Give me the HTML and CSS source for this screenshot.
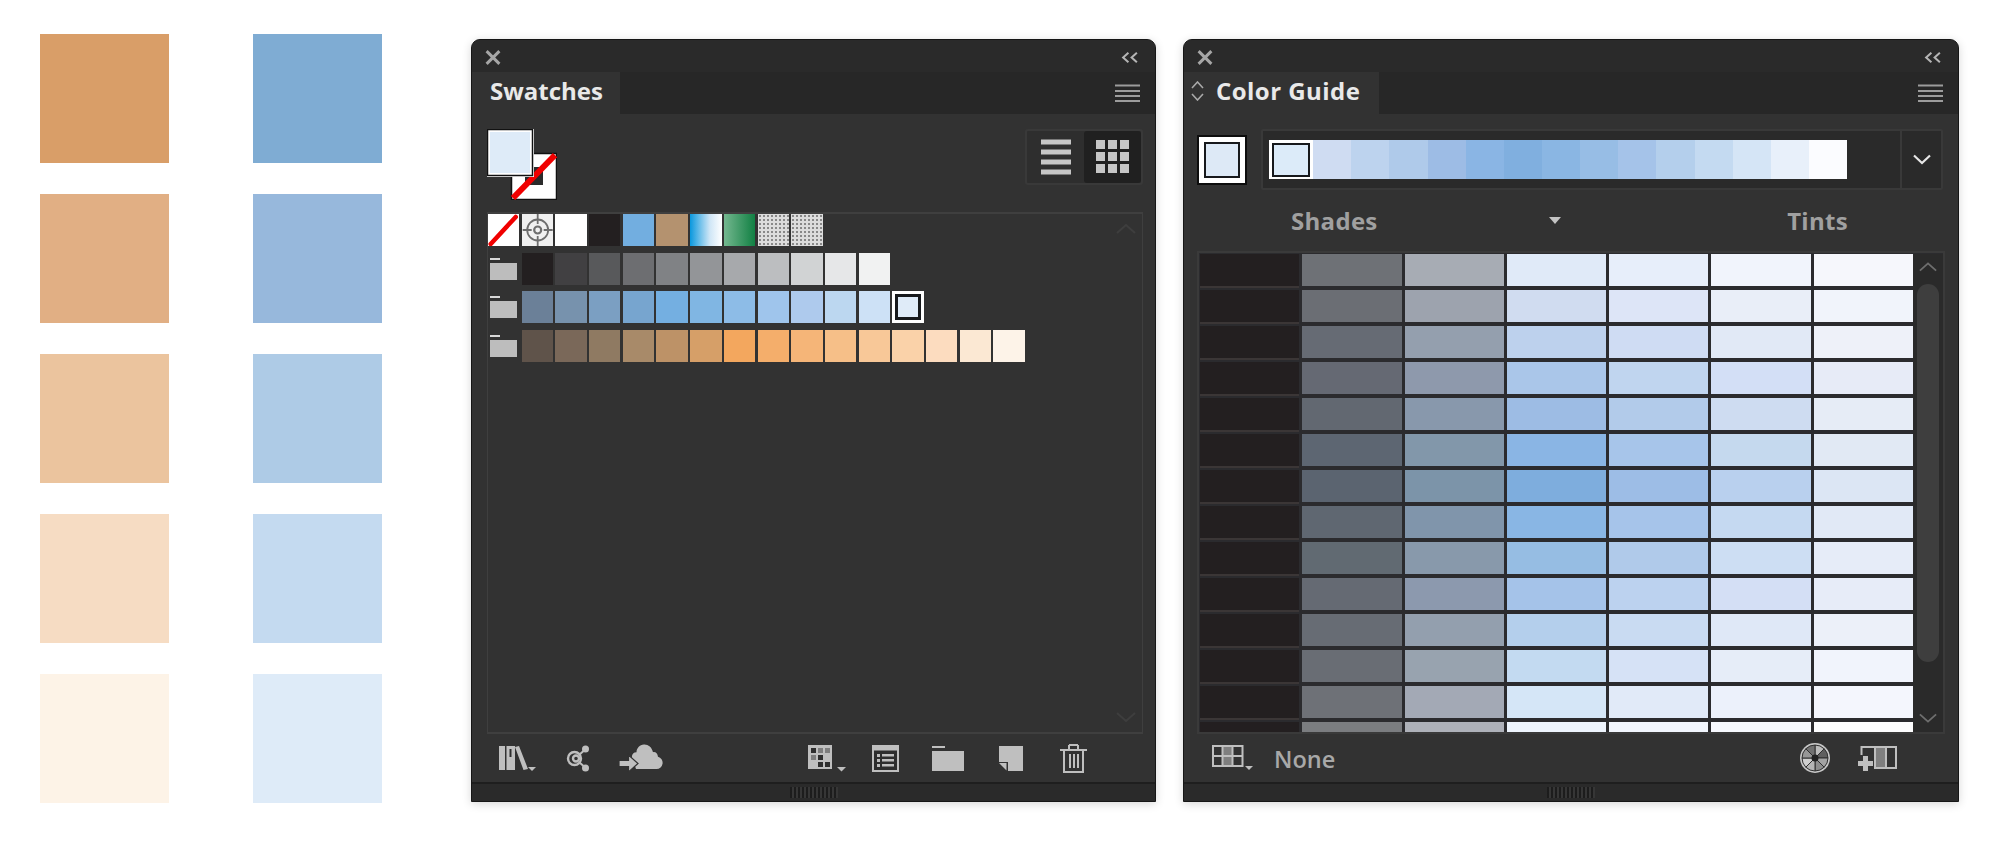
FILE: index.html
```html
<!DOCTYPE html>
<html lang="en">
<head>
<meta charset="utf-8">
<title>Swatches and Color Guide</title>
<link rel="stylesheet" href="styles.css">
</head>
<body>
<main class="page">
  <section class="palette">
    <div class="chip" style="background:#d99e68"></div><div class="chip" style="background:#7facd3"></div>
    <div class="chip" style="background:#e1af84"></div><div class="chip" style="background:#97b8dc"></div>
    <div class="chip" style="background:#ebc49e"></div><div class="chip" style="background:#aecbe6"></div>
    <div class="chip" style="background:#f6dcc3"></div><div class="chip" style="background:#c4daf0"></div>
    <div class="chip" style="background:#fdf3e7"></div><div class="chip" style="background:#deebf8"></div>
  </section>

  <section class="panel panel-swatches">
    <div class="titlebar">
      <svg class="close" viewBox="0 0 15 14"><path d="M1.500 1l12 12M13.500 1l-12 12"/></svg>
      <svg class="collapse" viewBox="0 0 17 12"><path d="M7 1.500L2 6l5 4.500M15 1.500L10 6l5 4.500"/></svg>
    </div>
    <div class="tabs">
      <div class="tab tab-swatches">Swatches</div>
      <svg class="menu" viewBox="0 0 25 18"><path d="M0 1.500h25M0 7h25M0 12h25M0 17h25"/></svg>
    </div>
    <div class="body body-swatches">
      <div class="sw-head">
        <svg class="fillstroke" viewBox="0 0 70 71">
          <rect x="24.500" y="24.500" width="45" height="46" fill="#fff" stroke="#111" stroke-width="1.500"/>
          <rect x="38" y="38" width="18" height="18" fill="#2b2b2b"/>
          <path d="M26 69L68 26" stroke="#f00000" stroke-width="6"/>
          <rect x="1" y="1" width="44" height="45" fill="#deebf8" stroke="#fff" stroke-width="4"/>
          <rect x="0.500" y="0.500" width="45" height="46" fill="none" stroke="#111" stroke-width="1.500"/>
        </svg>
        <div class="viewbox">
          <div class="viewbtn">
            <svg width="30" height="36" viewBox="0 0 30 36"><path class="bars" d="M0 3h30M0 13h30M0 23h30M0 33h30"/></svg>
          </div>
          <div class="viewbtn viewbtn-on">
            <svg width="34" height="34" viewBox="0 0 34 34"><path class="dots" d="M0 0h9v9H0zM12 0h9v9h-9zM24 0h9v9h-9zM0 12h9v9H0zM12 12h9v9h-9zM24 12h9v9h-9zM0 24h9v9H0zM12 24h9v9h-9zM24 24h9v9h-9z"/></svg>
          </div>
        </div>
      </div>
      <div class="sw-box">
        <div class="sw-list">
          <div class="sw-row">
            <div class="sw sw-white">
              <svg viewBox="0 0 30 32"><path d="M2 30L27 3" stroke="#f00000" stroke-width="4.500" stroke-linecap="round"/></svg>
            </div>
            <div class="sw sw-reg">
              <svg viewBox="0 0 30 32" fill="none" stroke="#6e6e6e"><circle cx="15" cy="16" r="10.500" stroke-width="1.800"/><circle cx="15" cy="16" r="3.500" stroke-width="2.200"/><path d="M15 0v10M15 22v10M0 16h9M21 16h9" stroke-width="1.800"/></svg>
            </div>
            <div class="sw sw-white"></div>
            <div class="sw" style="background:#231f20"></div>
            <div class="sw" style="background:#72aee0"></div>
            <div class="sw" style="background:#b4926f"></div>
            <div class="sw sw-grad-blue"></div>
            <div class="sw sw-grad-green"></div>
            <div class="sw sw-dots"></div>
            <div class="sw sw-dots"></div>
          </div>
          <div class="sw-row">
            <div class="sw-folder"><span class="f-tab"></span><span class="f-body"></span></div>
            <div class="sw" style="background:#231f20"></div>
            <div class="sw" style="background:#414042"></div>
            <div class="sw" style="background:#58595b"></div>
            <div class="sw" style="background:#6d6e71"></div>
            <div class="sw" style="background:#808285"></div>
            <div class="sw" style="background:#939598"></div>
            <div class="sw" style="background:#a7a9ac"></div>
            <div class="sw" style="background:#bcbec0"></div>
            <div class="sw" style="background:#d1d3d4"></div>
            <div class="sw" style="background:#e6e7e8"></div>
            <div class="sw" style="background:#f1f2f2"></div>
          </div>
          <div class="sw-row">
            <div class="sw-folder"><span class="f-tab"></span><span class="f-body"></span></div>
            <div class="sw" style="background:#6b8098"></div>
            <div class="sw" style="background:#7792ad"></div>
            <div class="sw" style="background:#7b9fc2"></div>
            <div class="sw" style="background:#77a5cf"></div>
            <div class="sw" style="background:#74afe1"></div>
            <div class="sw" style="background:#80b6e3"></div>
            <div class="sw" style="background:#8dbce7"></div>
            <div class="sw" style="background:#9fc5ec"></div>
            <div class="sw" style="background:#aecaed"></div>
            <div class="sw" style="background:#bcd7f0"></div>
            <div class="sw" style="background:#cde1f6"></div>
            <div class="sw sw-selected"><span class="sw-selected-in"></span></div>
          </div>
          <div class="sw-row">
            <div class="sw-folder"><span class="f-tab"></span><span class="f-body"></span></div>
            <div class="sw" style="background:#5f534a"></div>
            <div class="sw" style="background:#7a6859"></div>
            <div class="sw" style="background:#8f7a62"></div>
            <div class="sw" style="background:#a88a69"></div>
            <div class="sw" style="background:#bd9267"></div>
            <div class="sw" style="background:#d69f68"></div>
            <div class="sw" style="background:#f3a75e"></div>
            <div class="sw" style="background:#f4ae6b"></div>
            <div class="sw" style="background:#f5b578"></div>
            <div class="sw" style="background:#f6bf88"></div>
            <div class="sw" style="background:#f8c898"></div>
            <div class="sw" style="background:#fad2a9"></div>
            <div class="sw" style="background:#fcdcbf"></div>
            <div class="sw" style="background:#fbe8d3"></div>
            <div class="sw" style="background:#fdf3e8"></div>
          </div>
        </div>
        <div class="sw-scroll">
          <svg class="faint" viewBox="0 0 20 10"><path d="M1 9l9-8 9 8"/></svg>
          <svg class="faint" viewBox="0 0 20 10"><path d="M1 1l9 8 9-8"/></svg>
        </div>
      </div>
    </div>
    <div class="footer footer-swatches">
      <svg class="ic ic-lib" width="37" height="27" viewBox="0 0 37 27">
        <path d="M0 1h6v24H0zM7.500 1h8.500v24H7.500zM16 2l4-1 9 23-4.500 1z"/>
        <path class="cut" d="M10.500 4h2v8h-2z"/>
        <path d="M29 22h8l-4 4z"/>
      </svg>
      <svg class="ic ic-link" width="24" height="27" viewBox="0 0 24 27">
        <circle cx="19.500" cy="4" r="3.500"/><circle cx="19.500" cy="23" r="3.500"/>
        <path class="line" d="M17.500 6L13 10M13 17l4.500 4"/>
        <circle class="ring" cx="8.500" cy="13.500" r="6.500"/><circle class="ring" cx="10" cy="13.500" r="3"/>
      </svg>
      <svg class="ic ic-cloud" width="44" height="28" viewBox="0 0 44 28">
        <path d="M17 25h20.500a6.200 6.200 0 0 0 1.500-12.200C38.600 9.500 36.500 7.600 34 8.200 32.800 3 29 .2 25 .5c-4.500.4-7.500 3.800-7.500 7.700-3.200 0-5 2.500-4.500 5.300z"/>
        <path class="edge" d="M0 16.500h9.500v-5.500l9.500 8.500-9.500 8.500v-5.500H0z"/>
      </svg>
      <svg class="ic ic-grid" width="38" height="27" viewBox="0 0 38 27">
        <path d="M0 0h24v24H0z"/>
        <path fill="#2e2e2e" d="M3 3h5v5H3zM10 10h5v5h-5zM17 17h5v5h-5zM10 17h5v5h-5z"/>
        <path fill="#7e7e7e" d="M10 3h5v5h-5zM17 3h5v5h-5zM3 10h5v5H3z"/>
        <path d="M29 22h9l-4.500 4.500z"/>
      </svg>
      <svg class="ic ic-list" width="27" height="27" viewBox="0 0 27 27">
        <path d="M0 0h27v27H0z"/>
        <path class="cut" d="M2 5.500h23V25H2z"/>
        <path d="M5 9h3v3H5zM10 9h12v2.500H10zM5 14h3v3H5zM10 14h12v2.500H10zM5 19h3v3H5zM10 19h12v2.500H10z"/>
      </svg>
      <svg class="ic ic-folder" width="32" height="25" viewBox="0 0 32 25">
        <path d="M0 5h32v20H0zM0 0h13v2H0z"/>
      </svg>
      <svg class="ic ic-new" width="24" height="25" viewBox="0 0 24 25">
        <path d="M0 0h24v25H9v-9H0z"/><path d="M0 17h7.500v7.500z"/>
      </svg>
      <svg class="ic ic-trash" width="27" height="29" viewBox="0 0 27 29">
        <path d="M0 5h27v2H0zM9 0h9v2H9zM8 1h2v5H8zM17 1h2v5h-2z"/>
        <path d="M3 7h2v20h17V7h2v22H3zM9 10h2v14H9zM13 10h2v14h-2zM17 10h2v14h-2z"/>
      </svg>
    </div>
    <div class="strip"><span class="grip"></span></div>
  </section>

  <section class="panel panel-guide">
    <div class="titlebar">
      <svg class="close" viewBox="0 0 15 14"><path d="M1.500 1l12 12M13.500 1l-12 12"/></svg>
      <svg class="collapse" viewBox="0 0 17 12"><path d="M7 1.500L2 6l5 4.500M15 1.500L10 6l5 4.500"/></svg>
    </div>
    <div class="tabs">
      <div class="tab tab-guide">
        <svg class="updown" viewBox="0 0 13 20"><path d="M1 7l5.500-6L12 7M1 13l5.500 6L12 13"/></svg>
        <span>Color Guide</span>
      </div>
      <svg class="menu" viewBox="0 0 25 18"><path d="M0 1.500h25M0 7h25M0 12h25M0 17h25"/></svg>
    </div>
    <div class="body body-guide">
      <div class="cg-top">
        <div class="cg-active"><span class="cg-active-in"></span></div>
        <div class="cg-strip">
          <div class="cg-bar-wrap">
            <div class="cg-bar">
              <div class="seg seg-chip"><span class="seg-chip-in"></span></div>
              <div class="seg" style="background:#cfdcf2"></div>
              <div class="seg" style="background:#bdd3ee"></div>
              <div class="seg" style="background:#afcaea"></div>
              <div class="seg" style="background:#9dbce5"></div>
              <div class="seg" style="background:#8ab5e4"></div>
              <div class="seg" style="background:#80afdf"></div>
              <div class="seg" style="background:#8ab6e3"></div>
              <div class="seg" style="background:#97bde5"></div>
              <div class="seg" style="background:#a5c3e9"></div>
              <div class="seg" style="background:#b4cfec"></div>
              <div class="seg" style="background:#c4daf1"></div>
              <div class="seg" style="background:#d5e5f6"></div>
              <div class="seg" style="background:#e8f0fa"></div>
              <div class="seg" style="background:#fbfcff"></div>
            </div>
          </div>
          <div class="cg-drop">
            <svg width="18" height="11" viewBox="0 0 18 11"><path d="M1 1.500l8 7.500 8-7.500"/></svg>
          </div>
        </div>
      </div>
      <div class="cg-labels">
        <span class="lbl">Shades</span>
        <span class="lbl-caret"></span>
        <span class="lbl lbl-tints">Tints</span>
      </div>
      <div class="cg-box">
        <div class="cg-grid">
          <div class="k"></div><div style="background:#6e7176"></div><div style="background:#a7acb4"></div><div style="background:#e0eaf8"></div><div style="background:#e7eefa"></div><div style="background:#f1f4fc"></div><div style="background:#f6f7fc"></div>
          <div class="k"></div><div style="background:#6b6e74"></div><div style="background:#9da3ae"></div><div style="background:#d0dcf0"></div><div style="background:#dde5f7"></div><div style="background:#e9eef8"></div><div style="background:#f1f4fb"></div>
          <div class="k"></div><div style="background:#666b74"></div><div style="background:#949fae"></div><div style="background:#bdd1ed"></div><div style="background:#cfdcf3"></div><div style="background:#e1e9f6"></div><div style="background:#eef1f9"></div>
          <div class="k"></div><div style="background:#656973"></div><div style="background:#8e99ac"></div><div style="background:#aac6e9"></div><div style="background:#c0d5ef"></div><div style="background:#d3dff6"></div><div style="background:#e7ebf7"></div>
          <div class="k"></div><div style="background:#626871"></div><div style="background:#8898ac"></div><div style="background:#9dbce4"></div><div style="background:#b2cbea"></div><div style="background:#cedcf1"></div><div style="background:#e6ecf6"></div>
          <div class="k"></div><div style="background:#5d6672"></div><div style="background:#8297aa"></div><div style="background:#8ab5e4"></div><div style="background:#a7c5ea"></div><div style="background:#c5d9ee"></div><div style="background:#e1e9f4"></div>
          <div class="k"></div><div style="background:#5b6470"></div><div style="background:#7c94a9"></div><div style="background:#7eaddd"></div><div style="background:#9dbde6"></div><div style="background:#b9d0ee"></div><div style="background:#dce6f4"></div>
          <div class="k"></div><div style="background:#5f6771"></div><div style="background:#8095ab"></div><div style="background:#89b6e4"></div><div style="background:#a6c4ea"></div><div style="background:#c5d9f1"></div><div style="background:#e1e9f6"></div>
          <div class="k"></div><div style="background:#616a72"></div><div style="background:#8899ab"></div><div style="background:#96bde3"></div><div style="background:#b0caea"></div><div style="background:#cddef3"></div><div style="background:#e6ecf8"></div>
          <div class="k"></div><div style="background:#656a73"></div><div style="background:#8c99ae"></div><div style="background:#a5c3e9"></div><div style="background:#bcd2ef"></div><div style="background:#d4dff5"></div><div style="background:#e7ecf8"></div>
          <div class="k"></div><div style="background:#676c74"></div><div style="background:#939fae"></div><div style="background:#b4cfec"></div><div style="background:#c9dbf2"></div><div style="background:#dfe8f7"></div><div style="background:#ecf0f9"></div>
          <div class="k"></div><div style="background:#696d74"></div><div style="background:#98a3af"></div><div style="background:#c3daf1"></div><div style="background:#d6e2f6"></div><div style="background:#e6edf8"></div><div style="background:#f1f4fc"></div>
          <div class="k"></div><div style="background:#6e7177"></div><div style="background:#a3a9b5"></div><div style="background:#d5e6f7"></div><div style="background:#e1eaf8"></div><div style="background:#ecf1fb"></div><div style="background:#f4f6fd"></div>
          <div class="k"></div><div style="background:#7b7d80"></div><div style="background:#aeb1b9"></div><div style="background:#eef4fd"></div><div style="background:#f2f6fd"></div><div style="background:#f7f9fe"></div><div style="background:#fdfdfe"></div>
        </div>
        <div class="cg-scroll">
          <svg class="arrow" viewBox="0 0 20 10"><path d="M1 9l9-8 9 8"/></svg>
          <div class="thumb"></div>
          <svg class="arrow" viewBox="0 0 20 10"><path d="M1 1l9 8 9-8"/></svg>
        </div>
      </div>
    </div>
    <div class="footer footer-guide">
      <svg class="ic ic-harm" width="41" height="26" viewBox="0 0 41 26">
        <path fill="#7f7f7f" d="M10 1h11v20H10z"/>
        <path class="gridline" d="M1 1h29.500v20H1zM1 11h29.500M10.500 1v20M20.500 1v20"/>
        <path d="M33 21h8l-4 4z"/>
      </svg>
      <span class="none">None</span>
      <svg class="ic ic-wheel" width="30" height="30" viewBox="0 0 30 30">
        <circle cx="15" cy="15" r="15" fill="#c8c8c8"/>
        <g stroke="#2f2f2f" stroke-width="1">
          <path fill="#bdbdbd" d="M15 15V2A13 13 0 0 1 24.200 5.800Z"/>
          <path fill="#5f5f5f" d="M15 15L24.200 5.800A13 13 0 0 1 28 15Z"/>
          <path fill="#a2a2a2" d="M15 15H28A13 13 0 0 1 24.200 24.200Z"/>
          <path fill="#8d8d8d" d="M15 15L24.200 24.200A13 13 0 0 1 15 28Z"/>
          <path fill="#b5b5b5" d="M15 15V28A13 13 0 0 1 5.800 24.200Z"/>
          <path fill="#d0d0d0" d="M15 15L5.800 24.200A13 13 0 0 1 2 15Z"/>
          <path fill="#979797" d="M15 15H2A13 13 0 0 1 5.800 5.800Z"/>
          <path fill="#727272" d="M15 15L5.800 5.800A13 13 0 0 1 15 2Z"/>
        </g>
        <circle cx="15" cy="15" r="3.500" fill="#222"/>
      </svg>
      <svg class="ic ic-add" width="39" height="25" viewBox="0 0 39 25">
        <path class="gridline" d="M3.500 9V1H38v21H17V1M28 1v21"/>
        <path fill="#7f7f7f" d="M18 2h9v19h-9z"/>
        <path fill="#323232" d="M0 9h15v16H0z"/>
        <path d="M5 10h5v5h5v5h-5v5H5v-5H0v-5h5z"/>
      </svg>
    </div>
    <div class="strip"><span class="grip"></span></div>
  </section>
</main>
</body>
</html>
```
FILE: styles.css
```css
* { box-sizing: border-box; }
html, body { margin: 0; padding: 0; background: #fff; }
body { font-family: "Open Sans", "Noto Sans", sans-serif; }

.page {
  width: 2000px;
  height: 846px;
  padding: 34px 0 0 40px;
  display: flex;
  align-items: flex-start;
  overflow: hidden;
}

.palette {
  display: grid;
  grid-template-columns: 129px 129px;
  grid-auto-rows: 129px;
  column-gap: 84px;
  row-gap: 31px;
}

.panel {
  margin-top: 5px;
  height: 763px;
  display: flex;
  flex-direction: column;
  background: #323232;
  border: 1px solid #161616;
  border-radius: 9px 9px 0 0;
  box-shadow: 0 2px 10px rgba(0, 0, 0, .16);
  overflow: hidden;
}
.panel-swatches { width: 685px; margin-left: 89px; }
.panel-guide { width: 776px; margin-left: 27px; }

.titlebar {
  height: 32px;
  flex: none;
  background: #2a2a2a;
  display: flex;
  align-items: center;
  justify-content: space-between;
  padding: 2px 16px 0 13px;
}
.close { width: 16px; height: 15px; fill: none; stroke: #a6a6a6; stroke-width: 2.8; }
.collapse { width: 18px; height: 13px; fill: none; stroke: #b4b4b4; stroke-width: 1.9; }

.tabs {
  height: 42px;
  flex: none;
  background: #272727;
  display: flex;
  align-items: stretch;
  justify-content: space-between;
  padding-right: 15px;
}
.tab {
  background: #323232;
  color: #e9e9e9;
  font-size: 24px;
  font-weight: 700;
  line-height: 38px;
  padding-bottom: 4px;
  display: flex;
  align-items: center;
}
.tab-swatches { width: 148px; padding-left: 18px; }
.tab-guide { width: 195px; padding-left: 7px; gap: 12px; letter-spacing: .45px; }
.updown { width: 13px; height: 20px; fill: none; stroke: #a9a9a9; stroke-width: 1.6; }
.menu { width: 25px; height: 18px; align-self: center; fill: none; stroke: #9c9c9c; stroke-width: 2; }

.body { flex: 1; min-height: 0; display: flex; flex-direction: column; }
.body-swatches { padding: 15px 12px 0 15px; }
.body-guide { padding: 15px 13px 0 13px; }

.sw-head {
  height: 56px;
  flex: none;
  margin-bottom: 27px;
  display: flex;
  justify-content: space-between;
}
.fillstroke { width: 70px; height: 71px; flex: none; }
.viewbox {
  width: 118px;
  height: 56px;
  border: 2px solid #393939;
  border-radius: 3px;
  background: #2e2e2e;
  display: flex;
}
.viewbtn { flex: 1; display: flex; align-items: center; justify-content: center; }
.viewbtn-on { background: #202020; border-radius: 3px; }
.bars { fill: none; stroke: #c6c6c6; stroke-width: 5; }
.dots { fill: #c6c6c6; }

.sw-box {
  flex: 1;
  min-height: 0;
  display: flex;
  border: 1px solid #3f3f3f;
  border-bottom-width: 2px;
  border-top-width: 2px;
}
.sw-list { flex: 1; }
.sw-row { display: flex; gap: 2.3px; height: 32px; margin-bottom: 6.5px; }
.sw { width: 31.4px; height: 32px; flex: none; overflow: hidden; }
.sw svg { display: block; width: 100%; height: 100%; }
.sw-white { background: #fff; }
.sw-reg { background: #f0f0f0; }
.sw-grad-blue { background: linear-gradient(90deg, #0a98de, #cfe6f6 62%, #fff); }
.sw-grad-green { background: linear-gradient(90deg, #74b78f, #118043); }
.sw-dots {
  background-color: #dcdcdc;
  background-image: radial-gradient(#888 1px, transparent 1.4px);
  background-size: 4px 4px;
}
.sw-selected { background: #fff; padding: 3px; }
.sw-selected-in { display: block; width: 100%; height: 100%; background: #dfebf8; border: 3px solid #17191c; }
.sw-folder { width: 31.4px; height: 32px; flex: none; padding: 5px 0 0 2px; }
.f-tab { display: block; width: 10px; height: 2px; background: #d8d8d8; margin-bottom: 3px; }
.f-body { display: block; width: 27px; height: 17px; background: #bdbdbd; }
.sw-scroll {
  width: 32px;
  flex: none;
  display: flex;
  flex-direction: column;
  justify-content: space-between;
  align-items: center;
  padding: 10px 0 10px;
}
.faint { width: 20px; height: 10px; fill: none; stroke: #3e3e3e; stroke-width: 2; }

.cg-top { height: 61px; flex: none; display: flex; align-items: center; gap: 14px; padding-bottom: 0; }
.cg-active {
  width: 50px;
  height: 50px;
  flex: none;
  background: #fff;
  border: 2px solid #0d0d0d;
  padding: 5px;
}
.cg-active-in { display: block; width: 100%; height: 100%; background: #dde9f6; border: 2px solid #17191c; }
.cg-strip {
  width: 682px;
  height: 61px;
  flex: none;
  display: flex;
  background: #2a2a2a;
  border: 2px solid #393939;
  border-radius: 2px;
}
.cg-bar-wrap { flex: 1; padding: 9px 0 0 6px; }
.cg-bar { width: 578px; height: 39px; display: flex; }
.seg { flex: 1; }
.seg-chip { background: #fff; padding: 3px 3px 2px 3px; }
.seg-chip-in { display: block; width: 100%; height: 100%; background: #dcebf9; border: 2px solid #17191c; }
.cg-drop {
  width: 41px;
  flex: none;
  border-left: 2px solid #393939;
  display: flex;
  align-items: center;
  justify-content: center;
}
.cg-drop svg { fill: none; stroke: #e6e6e6; stroke-width: 2.2; }

.cg-labels { height: 61px; flex: none; display: flex; align-items: center; padding: 0 97px 0 94px; }
.lbl { color: #a0a0a0; font-size: 24px; font-weight: 700; line-height: 1; letter-spacing: .3px; }
.lbl-tints { margin-left: auto; }
.lbl-caret {
  margin-left: 171px;
  width: 0;
  height: 0;
  border-style: solid;
  border-width: 7px 6px 0 6px;
  border-color: #c4c4c4 transparent transparent transparent;
}

.cg-box {
  flex: 1;
  min-height: 0;
  display: flex;
  background: #2b2b2e;
  border: 2px solid #3a3a3a;
  padding: 1px 0 0 1px;
  overflow: hidden;
}
.cg-grid {
  width: 713px;
  flex: none;
  display: grid;
  grid-template-columns: repeat(7, 1fr);
  grid-auto-rows: 32px;
  gap: 4px 3px;
  overflow: hidden;
}
.k { background: #231f20; box-shadow: 0 2px 0 #3b3636; }
.cg-scroll {
  flex: 1;
  background: #2a2a2a;
  display: flex;
  flex-direction: column;
  align-items: center;
  justify-content: space-between;
  padding: 8px 0 9px;
}
.arrow { width: 18px; height: 10px; flex: none; fill: none; stroke: #6e6e6e; stroke-width: 2; }
.thumb { width: 22px; height: 378px; flex: none; background: #3e3e3e; border-radius: 11px; margin: 0 0 40px; }

.footer { height: 48px; flex: none; display: flex; align-items: center; }
.ic { display: block; flex: none; fill: #bfbfbf; }
.cut { fill: #2e2e2e; }
.line { fill: none; stroke: #bfbfbf; stroke-width: 2; }
.ring { fill: none; stroke: #bfbfbf; stroke-width: 2.4; }
.edge { stroke: #323232; stroke-width: 1.2; }
.gridline { fill: none; stroke: #bfbfbf; stroke-width: 2; }

.footer-swatches { padding-left: 27px; }
.ic-link { margin-left: 30px; }
.ic-cloud { margin-left: 29px; }
.ic-grid { margin-left: 145px; }
.ic-list { margin-left: 26px; }
.ic-folder { margin-left: 33px; }
.ic-new { margin-left: 35px; }
.ic-trash { margin-left: 37px; }

.footer-guide { padding: 0 61px 0 28px; }
.none { margin: 3px 0 0 21px; color: #a8a8a8; font-size: 23.5px; font-weight: 600; line-height: 1; }
.ic-wheel { margin-left: auto; }
.ic-add { margin-left: 28px; }

.strip {
  height: 19px;
  flex: none;
  background: #2a2a2a;
  border-top: 2px solid #1e1e1e;
  display: flex;
  align-items: center;
  justify-content: center;
}
.grip {
  width: 48px;
  height: 11px;
  background: repeating-linear-gradient(90deg, #181818 0, #181818 2px, #3a3a3a 2px, #3a3a3a 4px);
  opacity: .75;
}
```
